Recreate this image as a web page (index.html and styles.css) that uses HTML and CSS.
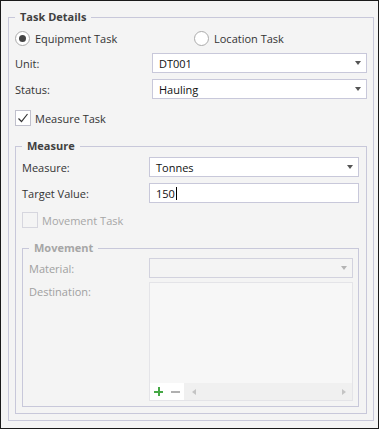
FILE: index.html
```html
<!DOCTYPE html>
<html lang="en">
<head>
  <meta charset="UTF-8">
  <title>Task Details</title>
  <link rel="stylesheet" href="styles.css">
</head>
<body>

<div class="window">
  <fieldset class="group">
    <legend>Task Details</legend>

    <div class="radio-row">
      <div class="radio checked"><span class="dot"></span>Equipment Task</div>
      <div class="radio"><span class="dot"></span>Location Task</div>
    </div>

    <div class="field">
      <span class="label">Unit:</span>
      <div class="combo">DT001<span class="arrow"></span></div>
    </div>
    <div class="field">
      <span class="label">Status:</span>
      <div class="combo">Hauling<span class="arrow"></span></div>
    </div>

    <div class="check checked">
      <span class="box">
        <svg width="12" height="12" viewBox="0 0 12 12"><polyline points="1.5,6.5 4.5,9.5 10.5,2" fill="none" stroke="#333" stroke-width="1.2"/></svg>
      </span>
      Measure Task
    </div>

    <fieldset class="group measure">
      <legend>Measure</legend>

      <div class="field">
        <span class="label">Measure:</span>
        <div class="combo">Tonnes<span class="arrow"></span></div>
      </div>
      <div class="field">
        <span class="label">Target Value:</span>
        <div class="combo">150<span class="caret"></span></div>
      </div>

      <div class="check disabled">
        <span class="box"></span>
        Movement Task
      </div>

      <fieldset class="group movement disabled">
        <legend>Movement</legend>

        <div class="field">
          <span class="label">Material:</span>
          <div class="combo"><span class="arrow"></span></div>
        </div>
        <div class="field list-field">
          <span class="label">Destination:</span>
          <div class="listbox">
            <div class="list-body"></div>
            <div class="list-bar">
              <div class="buttons">
                <span class="plus"></span>
                <span class="minus"></span>
              </div>
              <div class="hscroll">
                <span class="tri-left"></span>
                <span class="tri-right"></span>
              </div>
            </div>
          </div>
        </div>
      </fieldset>
    </fieldset>
  </fieldset>
</div>

</body>
</html>
```

FILE: styles.css
```css
html, body {
  margin: 0;
  padding: 0;
  height: 100%;
  background-color: #f4f4f4;
}

body {
  font-family: "Open Sans", "Noto Sans", sans-serif;
  font-size: 11px;
  color: #333;
}

.window {
  box-sizing: border-box;
  height: 100vh;
  border: 1px solid #1a1a1a;
  padding: 8px 4px 7px 7px;
  display: flex;
  flex-direction: column;
}

/* group boxes */
.group {
  margin: 0;
  min-width: 0;
  min-height: 0;
  border: 1px solid #c8c8da;
  padding: 5px 6px 6px 6px;
  display: flex;
  flex-direction: column;
  flex: 1;
}

.group legend {
  padding: 0 5px;
  line-height: 16px;
  font-weight: bold;
  color: #404040;
}

.measure {
  margin-top: 12px;
  padding: 3px 7px 6px 6px;
}

.movement {
  margin-top: 12px;
  padding: 2px 5px 5px 6px;
}

.movement legend {
  color: #a6a6a6;
}

/* radios */
.radio-row {
  display: flex;
  height: 17px;
  align-items: center;
}

.radio {
  display: flex;
  align-items: center;
  gap: 5px;
}

.radio:first-child {
  width: 179px;
}

.dot {
  box-sizing: border-box;
  width: 15px;
  height: 15px;
  border: 1px solid #ababab;
  border-radius: 50%;
  background: #fff;
  display: flex;
  align-items: center;
  justify-content: center;
}

.radio.checked .dot::after {
  content: "";
  width: 7px;
  height: 7px;
  border-radius: 50%;
  background: #444;
}

/* label + input rows */
.field {
  display: flex;
  align-items: center;
  margin-top: 6px;
}

.measure .field:first-of-type,
.movement .field:first-of-type {
  margin-top: 0;
}

.label {
  width: 137px;
  flex: none;
}

.measure .label {
  width: 127px;
}

.movement .label {
  width: 120px;
}

.combo {
  flex: 1;
  box-sizing: border-box;
  height: 20px;
  border: 1px solid #c8c8da;
  background: #fff;
  padding-left: 6px;
  display: flex;
  align-items: center;
  color: #111;
}

.arrow {
  margin-left: auto;
  margin-right: 5px;
  width: 0;
  height: 0;
  border-left: 3.5px solid transparent;
  border-right: 3.5px solid transparent;
  border-top: 4px solid #555;
}

.caret {
  display: inline-block;
  width: 1px;
  height: 13px;
  margin-left: 1px;
  background: #000;
}

/* checkboxes */
.check {
  display: flex;
  align-items: center;
  gap: 4px;
  height: 16px;
  margin-top: 11px;
}

.measure .check {
  margin-top: 9px;
}

.box {
  box-sizing: border-box;
  width: 16px;
  height: 16px;
  border: 1px solid #c0c0cc;
  background: #fff;
  display: flex;
  align-items: center;
  justify-content: center;
}

.check.disabled {
  color: #a6a6a6;
}

.check.disabled .box {
  background: #f4f4f4;
  border-color: #d6d6de;
}

/* disabled movement group */
.movement .label {
  color: #a0a0a0;
}

.movement .combo {
  background: #f4f4f4;
  border-color: #d2d2de;
}

.movement .arrow {
  border-top-color: #b4b4b4;
}

.list-field {
  flex: 1;
  align-items: stretch;
  margin-top: 4px;
}

.list-field .label {
  padding-top: 2px;
}

.listbox {
  flex: 1;
  border: 1px solid #e4e4e8;
  background: #f7f7f7;
  display: flex;
  flex-direction: column;
}

.list-body {
  flex: 1;
}

.list-bar {
  height: 17px;
  display: flex;
}

.buttons {
  width: 34px;
  background: #fff;
  display: flex;
  align-items: center;
  gap: 8px;
  padding-left: 4px;
  box-sizing: border-box;
}

.plus {
  position: relative;
  width: 9px;
  height: 9px;
}

.plus::before,
.plus::after {
  content: "";
  position: absolute;
  background: #45a845;
}

.plus::before {
  left: 0;
  top: 3.5px;
  width: 9px;
  height: 2px;
}

.plus::after {
  left: 3.5px;
  top: 0;
  width: 2px;
  height: 9px;
}

.minus {
  width: 9px;
  height: 2px;
  background: #b0b0b0;
}

.hscroll {
  flex: 1;
  background: #f0f0f0;
  display: flex;
  align-items: center;
  justify-content: space-between;
  padding: 0 6px 0 8px;
}

.tri-left {
  width: 0;
  height: 0;
  border-top: 3.5px solid transparent;
  border-bottom: 3.5px solid transparent;
  border-right: 4px solid #c4c4c4;
}

.tri-right {
  width: 0;
  height: 0;
  border-top: 3.5px solid transparent;
  border-bottom: 3.5px solid transparent;
  border-left: 4px solid #c4c4c4;
}
```
